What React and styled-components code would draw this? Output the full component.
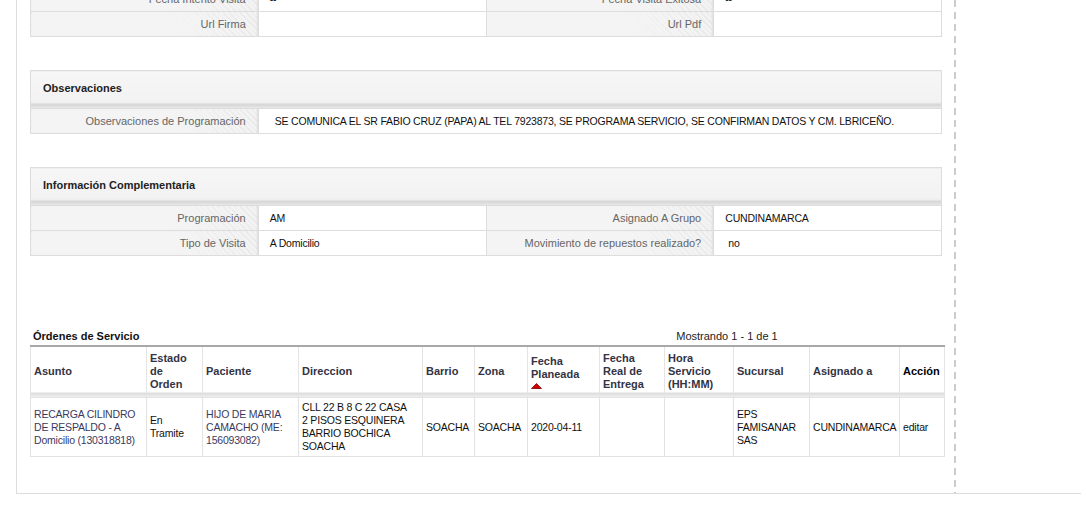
import React from "react";
import styled, { createGlobalStyle } from "styled-components";

const GlobalStyle = createGlobalStyle`
  html, body {
    margin: 0;
    padding: 0;
    background: #fff;
    overflow: hidden;
  }
  body {
    font-family: "Liberation Sans", Arial, sans-serif;
    font-size: 11px;
    color: #000;
  }
`;

const Page = styled.div`
  display: flex;
  margin: -14px 0 0 16px;
  border-left: 1px solid #dcdcdc;
  border-bottom: 1px solid #dcdcdc;
`;

const Main = styled.div`
  width: 940px;
  flex: none;
  box-sizing: border-box;
  padding: 0 15px 36px 13px;
  background-image: repeating-linear-gradient(
    to bottom,
    #cccccc 0 7px,
    transparent 7px 12px
  );
  background-size: 2px 100%;
  background-position: right 1px top 2px;
  background-repeat: no-repeat;
`;

const Side = styled.div`
  flex: 1;
`;

const Panel = styled.table`
  width: 100%;
  border-collapse: collapse;
  table-layout: fixed;
  border: 1px solid #dddddd;
  margin-top: ${(p) => p.$gap || 0}px;
`;

const Caption = styled.th`
  height: 34px;
  padding: 0 12px 3px;
  text-align: left;
  font-weight: bold;
  font-size: 11px;
  color: #222;
  border: 1px solid #dddddd;
  background: linear-gradient(
    to bottom,
    #f6f6f6 0,
    #f2f2f2 calc(100% - 6px),
    #d4d4d4 calc(100% - 4px),
    #ebebeb 100%
  );
`;

const Label = styled.td`
  height: 24px;
  padding: 0 12px;
  text-align: right;
  color: #666;
  white-space: nowrap;
  border: 1px solid #dddddd;
  box-shadow: inset -2px 0 2px -1px #dedede;
  background: linear-gradient(
      to right,
      #f4f4f4 0%,
      #f4f4f4 60%,
      rgba(244, 244, 244, 0) 100%
    ),
    repeating-linear-gradient(45deg, #e5e5e5 0 1px, #f4f4f4 1px 4px);
`;

const Value = styled.td`
  height: 24px;
  padding: 0 ${(p) => p.$pad || 11}px;
  font-size: 10.5px;
  letter-spacing: -0.2px;
  color: #111;
  white-space: nowrap;
  border: 1px solid #dddddd;
  background: #fff;
`;

const OrdersBar = styled.div`
  display: grid;
  grid-template-columns: 1fr 200px 114px;
  align-items: center;
  height: 18px;
  margin-top: 71px;
  padding: 0 3px;
  width: 914px;
  box-sizing: border-box;
`;

const OrdersTitle = styled.div`
  font-weight: bold;
  color: #111;
`;

const Pager = styled.div`
  text-align: center;
  color: #222;
`;

const Orders = styled.table`
  width: 914px;
  border-collapse: collapse;
  table-layout: fixed;
  border-top: 2px solid #a8a8a8;
`;

const Head = styled.th`
  padding: 5px 5px 6px 3px;
  line-height: 13px;
  text-align: left;
  vertical-align: middle;
  font-weight: bold;
  font-size: 11px;
  color: ${(p) => (p.$plain ? "#000" : "#333344")};
  border: 1px solid #e4e4e4;
  border-top: none;
  background: linear-gradient(
    to bottom,
    #ffffff 0,
    #ffffff calc(100% - 5px),
    #dcdcdc calc(100% - 4px),
    #eeeeee 100%
  );
`;

const Cell = styled.td`
  padding: 3px ${(p) => p.$pr || 3}px 3px 3px;
  line-height: 13px;
  font-size: 10.5px;
  letter-spacing: -0.2px;
  vertical-align: middle;
  color: ${(p) => (p.$link ? "#3a3a60" : "#111")};
  border: 1px solid #e2e2e2;
`;

const SortUp = () => (
  <svg width="11" height="6" viewBox="0 0 11 6" style={{ display: "block", marginTop: 2 }}>
    <polygon points="0.5,5.5 5.5,0.5 10.5,5.5" fill="#d40000" stroke="#7a0000" strokeWidth="0.8" />
  </svg>
);

const Cols = ({ widths }) => (
  <colgroup>
    {widths.map((w, i) => (
      <col key={i} style={{ width: w }} />
    ))}
  </colgroup>
);

const quarter = ["25%", "25%", "25%", "25%"];

const orderCols = [116, 56, 96, 124, 52, 53, 72, 65, 69, 76, 90, 45];

export default function App() {
  return (
    <>
      <GlobalStyle />
      <Page>
        <Main>
          <Panel>
            <Cols widths={quarter} />
            <tbody>
              <tr>
                <Label>Fecha Intento Visita</Label>
                <Value>--</Value>
                <Label>Fecha Visita Exitosa</Label>
                <Value>--</Value>
              </tr>
              <tr>
                <Label>Url Firma</Label>
                <Value></Value>
                <Label>Url Pdf</Label>
                <Value></Value>
              </tr>
            </tbody>
          </Panel>

          <Panel $gap={33}>
            <Cols widths={quarter} />
            <tbody>
              <tr>
                <Caption colSpan={4}>Observaciones</Caption>
              </tr>
              <tr>
                <Label>Observaciones de Programación</Label>
                <Value colSpan={3} $pad={16}>
                  SE COMUNICA EL SR FABIO CRUZ (PAPA) AL TEL 7923873, SE PROGRAMA SERVICIO, SE CONFIRMAN DATOS Y CM. LBRICEÑO.
                </Value>
              </tr>
            </tbody>
          </Panel>

          <Panel $gap={33}>
            <Cols widths={quarter} />
            <tbody>
              <tr>
                <Caption colSpan={4}>Información Complementaria</Caption>
              </tr>
              <tr>
                <Label>Programación</Label>
                <Value>AM</Value>
                <Label>Asignado A Grupo</Label>
                <Value>CUNDINAMARCA</Value>
              </tr>
              <tr>
                <Label>Tipo de Visita</Label>
                <Value>A Domicilio</Value>
                <Label>Movimiento de repuestos realizado?</Label>
                <Value $pad={14}>no</Value>
              </tr>
            </tbody>
          </Panel>

          <OrdersBar>
            <OrdersTitle>Órdenes de Servicio</OrdersTitle>
            <Pager>Mostrando 1 - 1 de 1</Pager>
            <span />
          </OrdersBar>
          <Orders>
            <Cols widths={orderCols.map((w) => w + "px")} />
            <thead>
              <tr>
                <Head>Asunto</Head>
                <Head>Estado de Orden</Head>
                <Head>Paciente</Head>
                <Head>Direccion</Head>
                <Head>Barrio</Head>
                <Head>Zona</Head>
                <Head>
                  Fecha Planeada
                  <SortUp />
                </Head>
                <Head>Fecha Real de Entrega</Head>
                <Head>Hora Servicio (HH:MM)</Head>
                <Head>Sucursal</Head>
                <Head>Asignado a</Head>
                <Head $plain>Acción</Head>
              </tr>
            </thead>
            <tbody>
              <tr>
                <Cell $link>RECARGA CILINDRO DE RESPALDO - A Domicilio (130318818)</Cell>
                <Cell $pr={7}>En Tramite</Cell>
                <Cell $link>HIJO DE MARIA CAMACHO (ME: 156093082)</Cell>
                <Cell $pr={12}>CLL 22 B 8 C 22 CASA 2 PISOS ESQUINERA BARRIO BOCHICA SOACHA</Cell>
                <Cell>SOACHA</Cell>
                <Cell>SOACHA</Cell>
                <Cell>2020-04-11</Cell>
                <Cell></Cell>
                <Cell></Cell>
                <Cell>EPS FAMISANAR SAS</Cell>
                <Cell>CUNDINAMARCA</Cell>
                <Cell>editar</Cell>
              </tr>
            </tbody>
          </Orders>
        </Main>
        <Side />
      </Page>
    </>
  );
}
